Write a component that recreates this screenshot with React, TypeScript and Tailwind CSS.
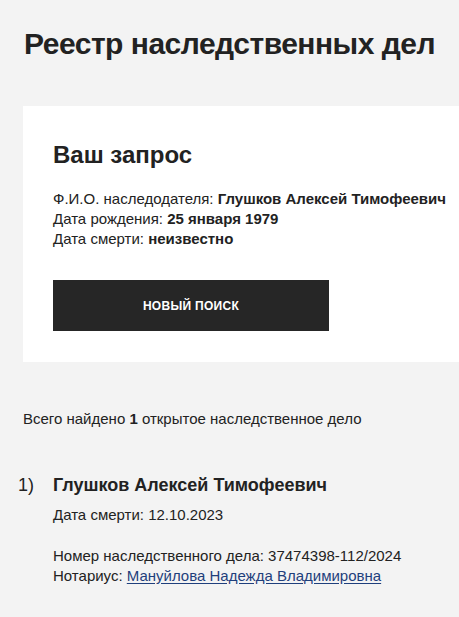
import React from 'react';

const font = { fontFamily: '"Liberation Sans", Arial, sans-serif' };

export default function App() {
  return (
    <div className="min-h-[617px] bg-[#f3f3f3] text-[#222222]" style={font}>
      <div className="pl-[24px] pt-[24px]">
        <h1 className="whitespace-nowrap text-[30px] leading-[40px] font-bold tracking-[-0.5px]">Реестр наследственных дел</h1>
      </div>

      <div className="ml-[23px] mt-[42px] bg-white pl-[30px] pt-[34px] pb-[31px]">
        <h2 className="text-[24px] leading-[30px] font-bold">Ваш запрос</h2>
        <div className="mt-[19px] text-[15px] leading-[20px]">
          <p>
            Ф.И.О. наследодателя: <b className="font-bold">Глушков Алексей Тимофеевич</b>
          </p>
          <p>
            Дата рождения: <b className="font-bold">25 января 1979</b>
          </p>
          <p>
            Дата смерти: <b className="font-bold">неизвестно</b>
          </p>
        </div>
        <button className="mt-[31px] flex h-[51px] w-[276px] items-center justify-center bg-[#262626] text-[12px] font-bold uppercase tracking-[0.3px] text-white">
          Новый поиск
        </button>
      </div>

      <p className="ml-[23px] mt-[47px] text-[15px] leading-[20px]">
        Всего найдено <b className="font-bold">1</b> открытое наследственное дело
      </p>

      <div className="mt-[44px] flex">
        <div className="w-[53px] pl-[18px] text-[18px] leading-[24px]">1)</div>
        <div>
          <div className="text-[18px] leading-[24px] font-bold">Глушков Алексей Тимофеевич</div>
          <div className="mt-[8px] text-[15px] leading-[20px]">Дата смерти: 12.10.2023</div>
          <div className="mt-[21px] text-[15px] leading-[20px]">
            <p>Номер наследственного дела: 37474398-112/2024</p>
            <p>
              Нотариус:{' '}
              <a href="#" className="text-[#1f3f7c] underline underline-offset-[2px]">
                Мануйлова Надежда Владимировна
              </a>
            </p>
          </div>
        </div>
      </div>
    </div>
  );
}
